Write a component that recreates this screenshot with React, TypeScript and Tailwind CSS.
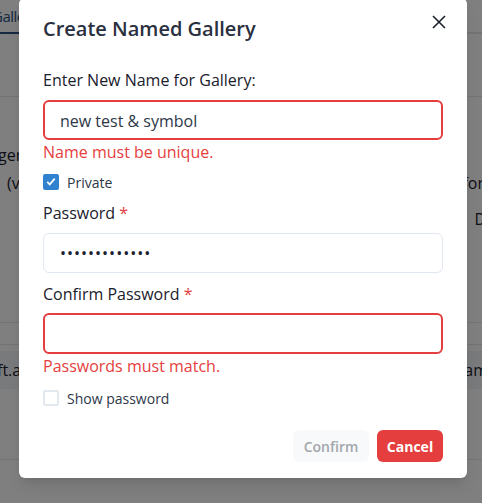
import React, { useState } from "react";

const font = { fontFamily: '"Open Sans", "Noto Sans", sans-serif' };

// The page behind the dialog: only thin strips of it show at the sides.
const BackgroundPage: React.FC = () => (
  <div className="w-[482px] h-[503px] overflow-hidden bg-white text-[#1a202c] text-[16px]" style={font}>
    <div className="flex h-[34px] border-b-2 border-gray-200">
      <div className="-ml-[8px] -mb-[2px] flex items-center border-b-2 border-[#2c5282] text-[15px] tracking-[-0.5px] text-[#2c5282]">
        Galleries
      </div>
    </div>
    <div className="h-[63px] border-b border-gray-200" />
    <div className="flex justify-between pt-[46px] leading-[24px]">
      <span className="-ml-[2px]">gen</span>
      <span />
    </div>
    <div className="flex justify-between pt-[4px] leading-[24px]">
      <span className="ml-[7px]">(vs</span>
      <span className="-mr-[2px]">for</span>
    </div>
    <div className="flex justify-end pt-[12px] leading-[24px]">
      <span className="-mr-[4px]">D</span>
    </div>
    <div className="h-[92px] border-b border-gray-200" />
    <div className="h-[22px] border-b border-gray-200" />
    <div className="mt-[6px] flex h-[38px] items-center justify-between bg-gray-100">
      <span className="-ml-[3px]">ft.a</span>
      <span className="-mr-[6px]">am</span>
    </div>
    <div className="h-[71px] border-b border-gray-200" />
  </div>
);

const Checkbox: React.FC<{ checked: boolean; label: string; onChange: () => void }> = ({
  checked,
  label,
  onChange,
}) => (
  <label className="flex cursor-pointer items-center gap-2" onClick={onChange}>
    <span
      className={`flex h-4 w-4 items-center justify-center rounded-[2px] border-2 ${
        checked ? "border-[#3182ce] bg-[#3182ce]" : "border-[#e2e8f0] bg-white"
      }`}
    >
      {checked && (
        <svg viewBox="0 0 12 10" className="h-[9px] w-[10px]" fill="none">
          <polyline points="1.5 5.5 4.5 8.5 10.5 1.5" stroke="white" strokeWidth="2" />
        </svg>
      )}
    </span>
    <span className="pt-[3px] text-[14px] leading-[20px] text-[#2d3748]">{label}</span>
  </label>
);

export default function App() {
  const [isPrivate, setIsPrivate] = useState(true);
  const [showPassword, setShowPassword] = useState(false);

  return (
    <div className="relative w-[482px] h-[503px] overflow-hidden">
      <BackgroundPage />
      <div className="absolute inset-0 bg-black/50" />

      <div
        className="absolute left-[19px] top-[-2px] w-[448px] rounded-md bg-white shadow-lg text-[#1a202c]"
        style={font}
      >
        <div className="px-6 py-4 text-[20px] font-semibold leading-[30px] text-[#2a3040]">Create Named Gallery</div>
        <button className="absolute right-3 top-2 flex h-8 w-8 items-center justify-center rounded-md">
          <svg viewBox="0 0 14 14" className="h-[14px] w-[14px]" fill="none">
            <path d="M1 1 L13 13 M13 1 L1 13" stroke="#1a202c" strokeWidth="1.6" />
          </svg>
        </button>

        <div className="px-6 pt-2">
          <div className="mb-2 text-[16px] font-medium leading-[24px]">Enter New Name for Gallery:</div>
          <div className="flex h-10 items-center rounded-md border-2 border-[#e53e3e] px-[15px] pt-[1px] text-[16px] text-[#2d3748]">
            new test &amp; symbol
          </div>
          <div className="text-[16px] leading-[24px] text-[#e53e3e]">Name must be unique.</div>

          <div className="mt-[6px]">
            <Checkbox checked={isPrivate} label="Private" onChange={() => setIsPrivate(!isPrivate)} />
          </div>

          <div className="mt-[8px] mb-2 text-[16px] font-medium leading-[24px]">
            Password <span className="text-[#e53e3e]">*</span>
          </div>
          <div className="flex h-10 items-center rounded-md border border-[#e2e8f0] px-4 text-[16px] tracking-[1px] text-[#1a202c]">
            •••••••••••••
          </div>

          <div className="mt-[9px] mb-[7px] text-[16px] font-medium leading-[24px]">
            Confirm Password <span className="text-[#e53e3e]">*</span>
          </div>
          <div className="h-[41px] rounded-md border-2 border-[#e53e3e]" />
          <div className="text-[16px] leading-[24px] text-[#e53e3e]">Passwords must match.</div>

          <div className="mt-[8px]">
            <Checkbox checked={showPassword} label="Show password" onChange={() => setShowPassword(!showPassword)} />
          </div>
        </div>

        <div className="flex justify-end gap-2 px-6 pt-[21px] pb-4">
          <button
            disabled
            className="h-8 w-[76px] rounded-md bg-[#f7f9fb] text-[14px] font-semibold text-[#a3a6ab]"
          >
            Confirm
          </button>
          <button className="h-8 w-[66px] rounded-md bg-[#e53e3e] text-[14px] font-bold text-white">Cancel</button>
        </div>
      </div>
    </div>
  );
}
